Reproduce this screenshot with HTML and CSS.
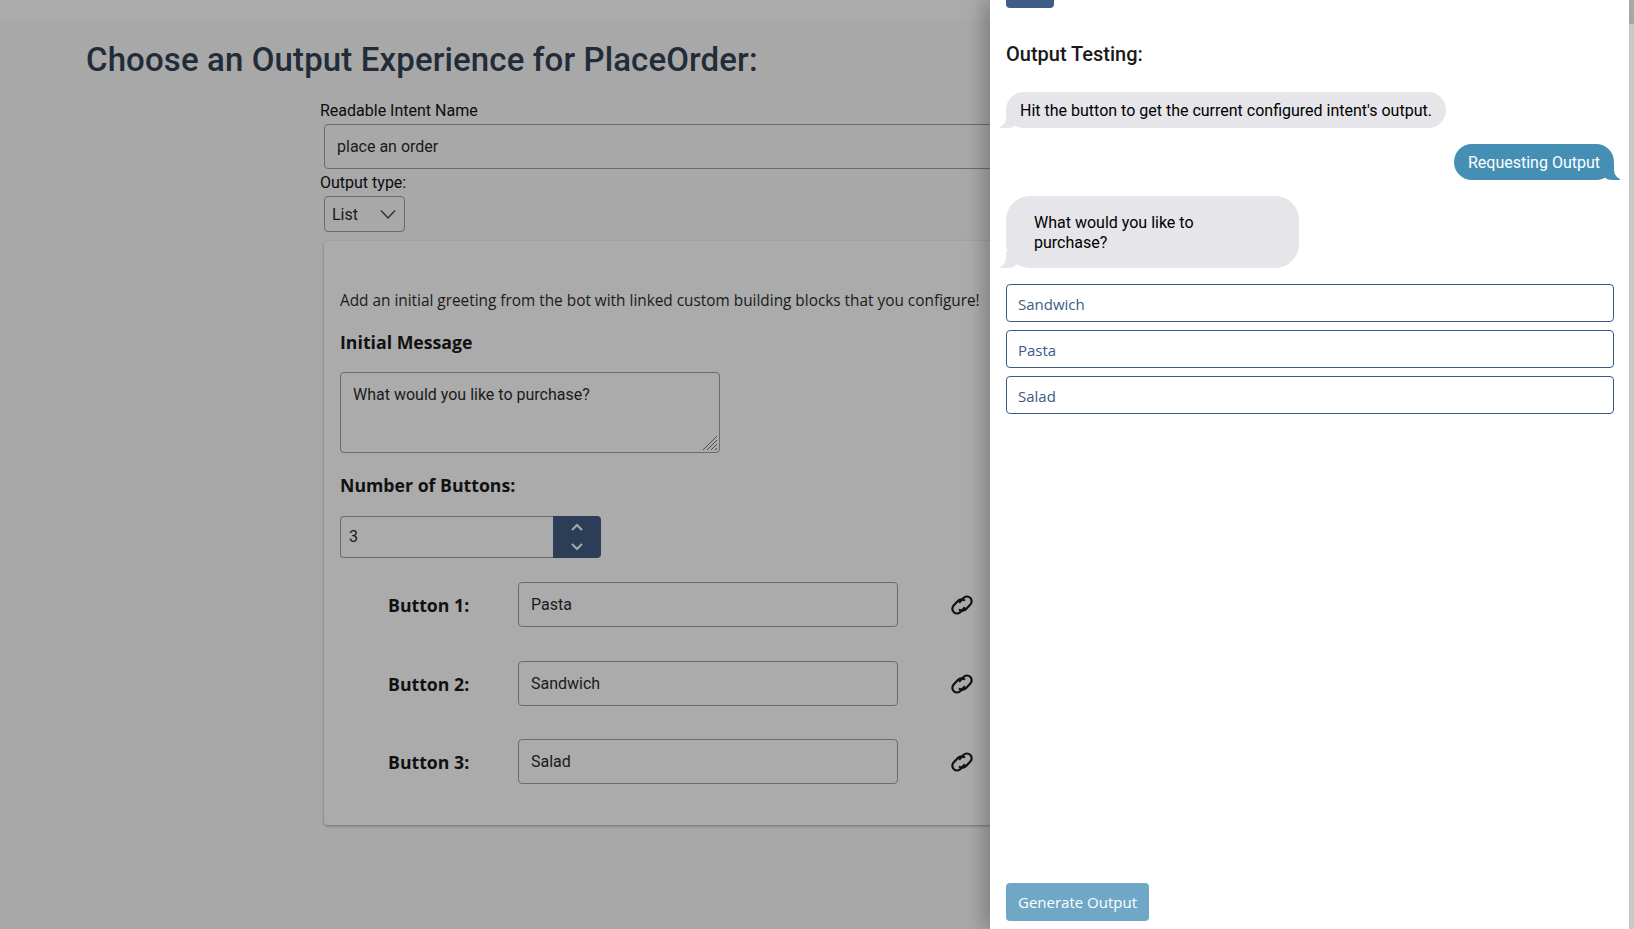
FILE: index.html
```html
<!DOCTYPE html>
<html lang="en">
<head>
  <meta charset="UTF-8" />
  <title>Output Experience</title>
  <link rel="stylesheet" href="styles.css">
</head>
<body>
  <svg class="icon-defs" width="0" height="0">
    <symbol id="link" viewBox="0 0 24 20">
      <g fill="none" stroke="#111" stroke-width="2.200">
        <rect x="-8" y="-4.700" width="16" height="9.400" rx="4.700" stroke-dasharray="35 7.300" transform="translate(14.700 8.600) rotate(-47)"/>
        <rect x="-8" y="-4.700" width="16" height="9.400" rx="4.700" stroke-dasharray="35 7.300" transform="translate(9.300 11.400) rotate(133)"/>
      </g>
    </symbol>
  </svg>

  <div class="top-bar"></div>

  <main class="page">
    <h1 class="page-title">Choose an Output Experience for PlaceOrder:</h1>

    <form class="intent-form">
      <label class="field-label">Readable Intent Name</label>
      <div class="text-box name-box">place an order</div>
      <label class="field-label type-label">Output type:</label>
      <div class="select-box">
        <span>List</span>
        <svg class="select-arrow" width="16" height="16" viewBox="0 0 16 16"><path d="M1 4.500 8 12l7-7.500" fill="none" stroke="#333" stroke-width="1.500"/></svg>
      </div>

      <section class="card">
        <p class="card-intro">Add an initial greeting from the bot with linked custom building blocks that you configure!</p>
        <h3 class="card-heading">Initial Message</h3>
        <div class="text-box message-box">What would you like to purchase?
          <svg class="resize-grip" width="16" height="16" viewBox="0 0 16 16"><path d="M1 15 15 1M5 15 15 5M9 15l6-6M13 15l2-2" stroke="#505050" stroke-width="1"/></svg>
        </div>
        <h3 class="card-heading count-heading">Number of Buttons:</h3>
        <div class="number-row">
          <div class="text-box number-box">3</div>
          <div class="spinner">
            <svg width="14" height="8" viewBox="0 0 14 8"><path d="M2 7l5-5 5 5" fill="none" stroke="#a6a6a6" stroke-width="2.200"/></svg>
            <svg width="14" height="8" viewBox="0 0 14 8"><path d="M2 1l5 5 5-5" fill="none" stroke="#a6a6a6" stroke-width="2.200"/></svg>
          </div>
        </div>

        <div class="button-row">
          <span class="button-label">Button 1:</span>
          <div class="text-box button-box">Pasta</div>
          <svg class="link-icon" width="24" height="20"><use href="#link"/></svg>
        </div>
        <div class="button-row">
          <span class="button-label">Button 2:</span>
          <div class="text-box button-box">Sandwich</div>
          <svg class="link-icon" width="24" height="20"><use href="#link"/></svg>
        </div>
        <div class="button-row">
          <span class="button-label">Button 3:</span>
          <div class="text-box button-box">Salad</div>
          <svg class="link-icon" width="24" height="20"><use href="#link"/></svg>
        </div>
      </section>
    </form>
  </main>

  <aside class="drawer">
    <div class="drawer-stub"></div>
    <h2 class="drawer-title">Output Testing:</h2>
    <div class="chat">
      <div class="bubble bot">Hit the button to get the current configured intent's output.</div>
      <div class="bubble user">Requesting Output</div>
      <div class="bubble bot list-bubble">What would you like to purchase?</div>
    </div>
    <div class="options">
      <button class="option">Sandwich</button>
      <button class="option">Pasta</button>
      <button class="option">Salad</button>
    </div>
    <button class="generate">Generate Output</button>
  </aside>
  <div class="scrollbar"></div>
</body>
</html>
```

FILE: styles.css
```css
* {
  box-sizing: border-box;
}

html {
  height: 929px;
  overflow: hidden;
}

body {
  margin: 0;
  height: 929px;
  overflow: hidden;
  background-color: #a8a8a8;
  font-family: Roboto, sans-serif;
  font-size: 16px;
  color: #111;
}

.icon-defs {
  position: absolute;
}

.top-bar {
  height: 20px;
  background-color: #ababab;
}

.page {
  padding-left: 86px;
  width: 1400px;
}

.page-title {
  margin: 20px 0 0;
  font-size: 33px;
  line-height: 40px;
  font-weight: 500;
  letter-spacing: 0.12px;
  color: #222c39;
}

.intent-form {
  margin: 21px 0 0 234px;
  width: 1000px;
}

.field-label {
  display: block;
  line-height: 19px;
  color: #0c0c0c;
}

.text-box {
  border: 1px solid #6b6b6b;
  border-radius: 4px;
  color: #1a1a1a;
}

.name-box {
  margin: 4px 0 0 4px;
  height: 45px;
  padding: 0 12px;
  line-height: 43px;
}

.type-label {
  margin-top: 4px;
}

.select-box {
  margin: 4px 0 0 4px;
  width: 81px;
  height: 36px;
  padding: 0 8px 0 7px;
  display: flex;
  align-items: center;
  justify-content: space-between;
  border: 1px solid #6b6b6b;
  border-radius: 4px;
  color: #1a1a1a;
}

.card {
  margin: 9px 0 0 4px;
  height: 584px;
  padding: 49px 16px 0;
  background-color: #ababab;
  border-radius: 4px;
  box-shadow: 0 1px 3px rgba(0, 0, 0, 0.35);
}

.card-intro {
  margin: 0;
  font-family: "Open Sans", sans-serif;
  font-size: 15.36px;
  line-height: 22px;
  color: #1a1a1a;
}

.card-heading {
  margin: 18px 0 0;
  font-family: "Open Sans", sans-serif;
  font-size: 17.7px;
  line-height: 24px;
  font-weight: 700;
  color: #111;
}

.message-box {
  position: relative;
  margin-top: 18px;
  width: 380px;
  height: 81px;
  padding: 12px;
  line-height: 20px;
}

.resize-grip {
  position: absolute;
  right: 1px;
  bottom: 1px;
}

.count-heading {
  margin-top: 20px;
}

.number-row {
  margin-top: 19px;
  display: flex;
  width: 261px;
  height: 42px;
}

.number-box {
  flex: 1;
  padding: 0 8px;
  line-height: 40px;
  border-right: 0;
  border-radius: 4px 0 0 4px;
}

.spinner {
  width: 48px;
  display: flex;
  flex-direction: column;
  align-items: center;
  justify-content: center;
  gap: 12px;
  background-color: #2b3d57;
  border-radius: 0 4px 4px 0;
}

.button-row {
  margin-top: 24px;
  display: flex;
  align-items: center;
  padding-left: 48px;
  height: 45px;
}

.button-row + .button-row {
  margin-top: 34px;
}

.button-row:last-child {
  margin-top: 33px;
}

.button-label {
  width: 130px;
  font-family: "Open Sans", sans-serif;
  font-size: 17.7px;
  font-weight: 700;
  color: #111;
}

.button-box {
  width: 380px;
  height: 45px;
  padding: 0 12px;
  line-height: 43px;
}

.link-icon {
  margin-left: 52px;
}

.drawer {
  position: absolute;
  top: 0;
  left: 990px;
  width: 639px;
  height: 929px;
  padding: 0 15px 0 16px;
  display: flex;
  flex-direction: column;
  background-color: #fff;
  box-shadow: -8px 0 16px rgba(0, 0, 0, 0.22);
}

.drawer-stub {
  width: 48px;
  height: 8px;
  background-color: #3f5c85;
  border-radius: 0 0 4px 4px;
}

.drawer-title {
  margin: 34px 0 0;
  font-size: 20px;
  line-height: 24px;
  font-weight: 500;
  color: #1a1a1a;
}

.chat {
  margin-top: 26px;
  display: flex;
  flex-direction: column;
  gap: 16px;
  align-items: flex-start;
}

.bubble {
  position: relative;
  padding: 9px 14px 7px;
  line-height: 20px;
  border-radius: 18px;
}

.bubble::before,
.bubble::after {
  content: "";
  position: absolute;
  bottom: 0;
  height: 16px;
}

.bot {
  background-color: #e5e5ea;
  color: #000;
}

.bot::before {
  left: -6px;
  width: 20px;
  background-color: #e5e5ea;
  border-bottom-right-radius: 12px;
}

.bot::after {
  left: -16px;
  width: 16px;
  background-color: #fff;
  border-bottom-right-radius: 10px;
}

.user {
  align-self: flex-end;
  background-color: #458fb5;
  color: #fff;
}

.user::before {
  right: -6px;
  width: 20px;
  background-color: #458fb5;
  border-bottom-left-radius: 12px;
}

.user::after {
  right: -15px;
  width: 15px;
  background-color: #fff;
  border-bottom-left-radius: 10px;
}

.list-bubble {
  width: 293px;
  padding: 17px 64px 15px 28px;
  border-radius: 24px;
}

.options {
  margin-top: 16px;
  display: flex;
  flex-direction: column;
  gap: 8px;
}

.option {
  height: 38px;
  padding: 1px 11px 0;
  text-align: left;
  font-family: "Open Sans", sans-serif;
  font-size: 15px;
  color: #3b5b85;
  background-color: #fff;
  border: 1px solid #3b5b85;
  border-radius: 4px;
}

.generate {
  margin-top: auto;
  margin-bottom: 8px;
  align-self: flex-start;
  width: 143px;
  height: 38px;
  font-family: "Open Sans", sans-serif;
  font-size: 15px;
  color: #fff;
  background-color: #6fa8c7;
  border: 0;
  border-radius: 4px;
}

.scrollbar {
  position: absolute;
  top: 24px;
  right: 0;
  width: 5px;
  height: 905px;
  background-color: #c8c8c8;
}
```
